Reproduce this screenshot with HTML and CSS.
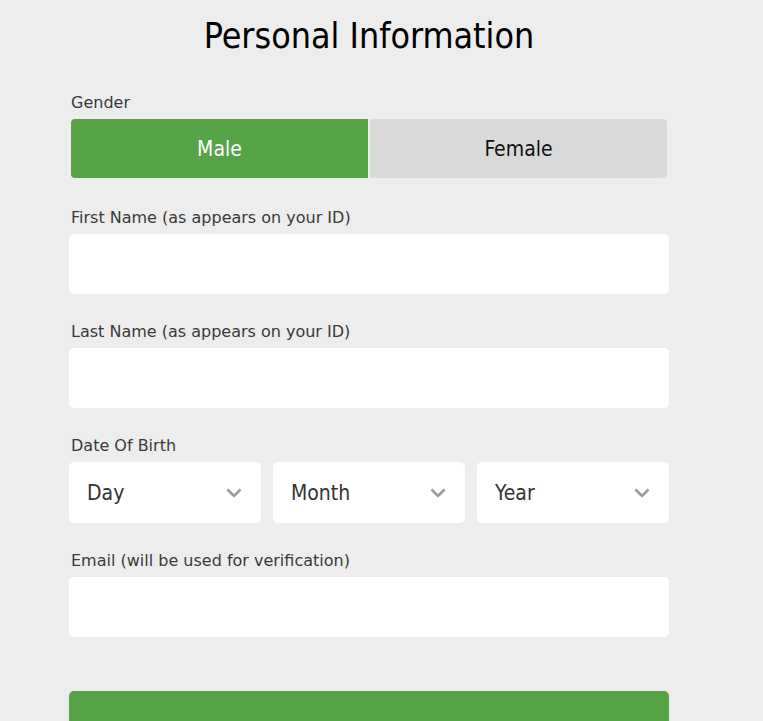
FILE: index.html
```html
<!DOCTYPE html>
<html>
<head>
<meta charset="utf-8">
<link rel="stylesheet" href="styles.css">
</head>
<body>
<div class="page">
  <h1 class="title">Personal Information</h1>
  <form class="form">
    <div class="field field-gender">
      <div class="label">Gender</div>
      <div class="toggle">
        <button type="button" class="toggle-btn active">Male</button>
        <button type="button" class="toggle-btn">Female</button>
      </div>
    </div>
    <div class="field">
      <div class="label">First Name (as appears on your ID)</div>
      <input class="input" type="text">
    </div>
    <div class="field">
      <div class="label">Last Name (as appears on your ID)</div>
      <input class="input" type="text">
    </div>
    <div class="field">
      <div class="label">Date Of Birth</div>
      <div class="dob">
        <div class="select"><span>Day</span><svg class="chev" width="16" height="10" viewBox="0 0 16 10"><path d="M1.5 1.5 L8 8 L14.5 1.5" fill="none" stroke="#9a9a9a" stroke-width="2.6"/></svg></div>
        <div class="select"><span>Month</span><svg class="chev" width="16" height="10" viewBox="0 0 16 10"><path d="M1.5 1.5 L8 8 L14.5 1.5" fill="none" stroke="#9a9a9a" stroke-width="2.6"/></svg></div>
        <div class="select"><span>Year</span><svg class="chev" width="16" height="10" viewBox="0 0 16 10"><path d="M1.5 1.5 L8 8 L14.5 1.5" fill="none" stroke="#9a9a9a" stroke-width="2.6"/></svg></div>
      </div>
    </div>
    <div class="field">
      <div class="label">Email (will be used for verification)</div>
      <input class="input" type="text">
    </div>
    <button type="button" class="submit"></button>
  </form>
</div>
</body>
</html>
```
FILE: styles.css
```css
html, body {
  margin: 0;
  padding: 0;
  background: #ededed;
  height: 100%;
  overflow: hidden;
}
body {
  font-family: "DejaVu Sans Condensed", "DejaVu Sans", sans-serif;
  font-stretch: condensed;
  color: #333;
}
.page {
  width: 600px;
  margin-left: 69px;
}
.title {
  margin: 0;
  padding-top: 14px;
  height: 93px;
  box-sizing: border-box;
  text-align: center;
  font-size: 35.5px;
  font-weight: normal;
  line-height: 44px;
  color: #000;
}
.field {
  margin-bottom: 28px;
}
.field-gender {
  margin-bottom: 30px;
}
.label {
  font-family: "DejaVu Sans", sans-serif;
  font-stretch: normal;
  font-size: 16px;
  line-height: 20px;
  margin: 0 0 6px 2px;
  color: #3a3a3a;
}
.toggle {
  display: flex;
  gap: 2px;
  margin: 0 2px;
  height: 59px;
}
.toggle-btn {
  flex: 1;
  border: none;
  margin: 0;
  padding: 0;
  font-family: inherit;
  font-stretch: condensed;
  font-size: 21px;
  background: #d9d9d9;
  color: #111;
}
.toggle-btn:first-child { border-radius: 4px 0 0 4px; }
.toggle-btn:last-child { border-radius: 0 4px 4px 0; }
.toggle-btn.active {
  background: #56a447;
  color: #fff;
}
.input {
  display: block;
  width: 100%;
  height: 60px;
  box-sizing: border-box;
  border: none;
  border-radius: 5px;
  background: #fff;
  margin: 0;
}
.dob {
  display: flex;
  gap: 12px;
}
.select {
  flex: 1;
  height: 61px;
  background: #fff;
  border-radius: 5px;
  display: flex;
  align-items: center;
  justify-content: space-between;
  padding: 0 19px 0 18px;
  font-size: 21px;
  color: #333;
}
.chev { display: block; }
.submit {
  display: block;
  width: 100%;
  height: 60px;
  margin-top: 54px;
  border: none;
  border-radius: 5px;
  background: #56a447;
}
```
